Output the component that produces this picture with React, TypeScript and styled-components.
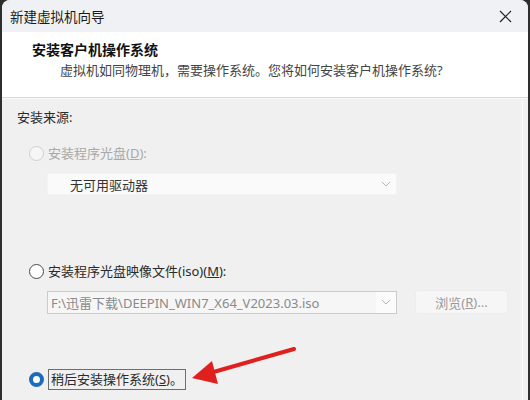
import React from "react";
import styled, { createGlobalStyle } from "styled-components";

const Global = createGlobalStyle`
  html, body { margin: 0; padding: 0; background: #2e2e2e; }
  body { width: 530px; height: 400px; overflow: hidden; font-family: "Noto Sans", "Noto Sans CJK SC", sans-serif; }
`;

const Win = styled.div`
  position: relative;
  margin: 0 2px 0 2px;
  width: 526px;
  height: 400px;
  border-radius: 8px 8px 0 0;
  overflow: hidden;
  background: #f0f0f0;
  display: flex;
  flex-direction: column;
`;

const TitleBar = styled.div`
  height: 32px;
  flex: none;
  background: #eff1f4;
  display: flex;
  align-items: center;
  justify-content: space-between;
  padding: 0 16px 0 8px;
  font-size: 13.5px;
  color: #1b1b1b;
`;

const Header = styled.div`
  height: 66px;
  flex: none;
  background: #ffffff;
  border-bottom: 1px solid #d9d9d9;
  box-shadow: 0 1px 0 #fafafa;
  padding: 8px 0 0 30px;
  box-sizing: border-box;
  display: flex;
  flex-direction: column;
`;

const HTitle = styled.div`
  font-size: 14px;
  font-weight: 700;
  color: #111;
  line-height: 20px;
`;

const HSub = styled.div`
  font-size: 13px;
  color: #444;
  line-height: 20px;
  padding-left: 28px;
`;

const Body = styled.div`
  flex: 1;
  display: flex;
  flex-direction: column;
  padding: 9px 0 0 15px;
  border-right: 1px solid #fafafa;
  margin-right: 5px;
  font-size: 13px;
  color: #2a2a2a;
`;

const Label = styled.div`
  line-height: 20px;
`;

const OptionRow = styled.div<{ $top: number; $disabled?: boolean }>`
  margin-top: ${(p) => p.$top}px;
  margin-left: 12px;
  display: flex;
  align-items: center;
  gap: 4px;
  line-height: 20px;
  color: ${(p) => (p.$disabled ? "#a8a8a8" : "#2a2a2a")};
`;

const Radio = styled.span<{ $state: "disabled" | "normal" | "checked" }>`
  width: 15px;
  height: 15px;
  box-sizing: border-box;
  border-radius: 50%;
  flex: none;
  background: ${(p) => (p.$state === "disabled" ? "#f6f6f6" : "#ffffff")};
  border: ${(p) =>
    p.$state === "disabled"
      ? "1px solid #cfcfcf"
      : p.$state === "normal"
      ? "1px solid #4a4a4a"
      : "4px solid #1c6bbd"};
`;

const Focus = styled.span`
  border: 1px solid #6e6e6e;
  padding: 0 2px 0 2px;
  line-height: 19px;
`;

const U = styled.span`
  text-decoration: underline;
`;

const FieldRow = styled.div<{ $top: number }>`
  margin-top: ${(p) => p.$top}px;
  margin-left: 30px;
  display: flex;
  align-items: center;
  gap: 18px;
`;

const Select = styled.div<{ $disabled?: boolean }>`
  width: 350px;
  height: ${(p) => (p.$disabled ? 22 : 23)}px;
  box-sizing: border-box;
  background: ${(p) => (p.$disabled ? "#fafafa" : "#f6f6f6")};
  border: 1px solid ${(p) => (p.$disabled ? "#f3f3f3" : "#cbcbcb")};
  display: flex;
  align-items: center;
  padding-left: ${(p) => (p.$disabled ? 22 : 3)}px;
  color: ${(p) => (p.$disabled ? "#333" : "#8a8a8a")};
  font-size: 13px;
`;

const SelectText = styled.span`
  flex: 1;
  white-space: nowrap;
  overflow: hidden;
`;

const Chevron = styled.span<{ $plain?: boolean }>`
  width: 20px;
  height: 100%;
  display: flex;
  align-items: center;
  justify-content: center;
  background: ${(p) => (p.$plain ? "transparent" : "#fbfbfb")};
`;

const Browse = styled.div`
  width: 93px;
  height: 24px;
  box-sizing: border-box;
  border: 1px solid #ececec;
  background: #f6f6f6;
  border-radius: 3px;
  display: flex;
  align-items: center;
  justify-content: center;
  color: #9a9a9a;
  font-size: 13px;
`;

const Arrow = styled.svg`
  position: absolute;
  left: 180px;
  top: 340px;
`;

const ChevronIcon = () => (
  <svg width="10" height="6" viewBox="0 0 10 6">
    <path d="M1 1 L5 5 L9 1" fill="none" stroke="#b5b5b5" strokeWidth="1" />
  </svg>
);

export default function App() {
  return (
    <>
      <Global />
      <Win>
        <TitleBar>
          <span>新建虚拟机向导</span>
          <svg width="13" height="13" viewBox="0 0 13 13">
            <path d="M1 1 L12 12 M12 1 L1 12" stroke="#222" strokeWidth="1.2" />
          </svg>
        </TitleBar>
        <Header>
          <HTitle>安装客户机操作系统</HTitle>
          <HSub>虚拟机如同物理机，需要操作系统。您将如何安装客户机操作系统?</HSub>
        </Header>
        <Body>
          <Label>安装来源:</Label>
          <OptionRow $top={16} $disabled>
            <Radio $state="disabled" />
            <span>
              安装程序光盘(<U>D</U>):
            </span>
          </OptionRow>
          <FieldRow $top={10}>
            <Select $disabled>
              <SelectText>无可用驱动器</SelectText>
              <Chevron $plain>
                <ChevronIcon />
              </Chevron>
            </Select>
          </FieldRow>
          <OptionRow $top={66}>
            <Radio $state="normal" />
            <span>
              安装程序光盘映像文件(iso)(<U>M</U>):
            </span>
          </OptionRow>
          <FieldRow $top={9}>
            <Select>
              <SelectText>F:\迅雷下载\DEEPIN_WIN7_X64_V2023.03.iso</SelectText>
              <Chevron>
                <ChevronIcon />
              </Chevron>
            </Select>
            <Browse>
              浏览(<U>R</U>)...
            </Browse>
          </FieldRow>
          <OptionRow $top={55}>
            <Radio $state="checked" />
            <Focus>
              稍后安装操作系统(<U>S</U>)。
            </Focus>
          </OptionRow>
        </Body>
        <Arrow width="120" height="50" viewBox="0 0 120 50">
          <path d="M112 9 L28 33" stroke="#e0201e" strokeWidth="4" strokeLinecap="round" />
          <path d="M10 38 L30 21 L36 44 Z" fill="#e0201e" />
        </Arrow>
      </Win>
    </>
  );
}
